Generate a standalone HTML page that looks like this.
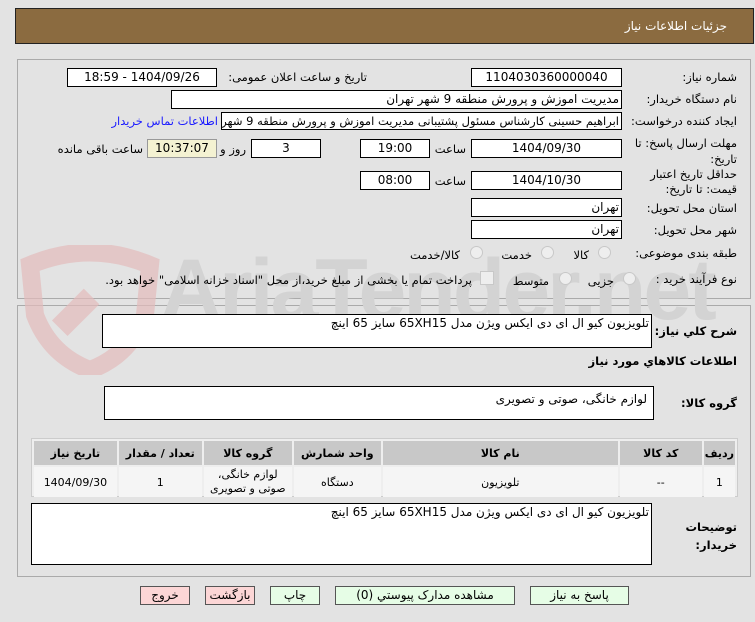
<!DOCTYPE html>
<html><head><meta charset="utf-8"><style>
body{margin:0;width:755px;height:622px;background:#e3e3e3;position:relative;overflow:hidden;font-family:"DejaVu Sans","Liberation Sans",sans-serif;font-size:11px;color:#000}
.a{position:absolute}
.box{position:absolute;background:#fff;border:1px solid #000;box-sizing:border-box;direction:rtl;text-align:center;line-height:16px;font-size:12px}
.l{position:absolute;direction:rtl;text-align:right;white-space:nowrap;font-size:11.5px}
.r{position:absolute;width:13px;height:13px;border-radius:50%;border:1px solid #c8c8c8;background:#eee;box-sizing:border-box}
.btn{position:absolute;top:586px;height:19px;border:1px solid #555;box-sizing:border-box;text-align:center;font-size:12px;line-height:17px;background:#e6fde6}
table{border-collapse:separate;border-spacing:2px;font-size:11px;direction:rtl}
th{background:#c8c8c8;height:22px;font-weight:bold}
td{background:#f5f5f5;height:28px;text-align:center}
</style></head><body>
<div class="a" style="left:15px;top:8px;width:739px;height:36px;background:#8b6b40;border:1px solid #222;box-sizing:border-box"></div>
<div class="l" style="right:28px;top:19px;color:#fff;font-size:12px">جزئیات اطلاعات نیاز</div>

<div class="a" style="left:17px;top:59px;width:734px;height:240px;border:1px solid #aaa;box-sizing:border-box"></div>
<div class="a" style="left:17px;top:305px;width:734px;height:272px;border:1px solid #aaa;box-sizing:border-box"></div>

<!-- watermark -->
<svg class="a" style="left:20px;top:245px;opacity:.7" width="140" height="130"><path d="M10 20 Q70 -5 130 20 L125 70 Q110 110 70 125 Q30 110 15 70 Z" fill="none" stroke="#e3bcbc" stroke-width="18"/><rect x="45" y="45" width="22" height="45" fill="#e3bcbc" transform="rotate(45 56 67)"/></svg>
<div class="a" style="left:160px;top:240px;width:560px;overflow:hidden;font-size:86px;font-weight:bold;color:#d3d3d3;font-family:'Liberation Sans',sans-serif;letter-spacing:-3px;line-height:100px;white-space:nowrap">AriaTender.net</div>

<div class="l" style="right:18px;top:70px">شماره نیاز:</div>
<div class="box" style="left:471px;top:68px;width:151px;height:19px">1104030360000040</div>
<div class="l" style="right:388px;top:70px">تاریخ و ساعت اعلان عمومی:</div>
<div class="box" style="left:67px;top:68px;width:150px;height:19px">1404/09/26 - 18:59</div>

<div class="l" style="right:18px;top:92px">نام دستگاه خریدار:</div>
<div class="box" style="left:171px;top:90px;width:451px;height:19px;text-align:right;padding-right:2px">مدیریت اموزش و پرورش منطقه 9 شهر تهران</div>

<div class="l" style="right:18px;top:114px">ایجاد کننده درخواست:</div>
<div class="box" style="left:221px;top:112px;width:401px;height:18px;text-align:right;padding-right:2px;overflow:hidden;white-space:nowrap;font-size:11.5px">ابراهیم حسینی کارشناس مسئول پشتیبانی مدیریت اموزش و پرورش منطقه 9 شهر تهران</div>
<div class="l" style="right:537px;top:114px;color:#1a1aff">اطلاعات تماس خریدار</div>

<div class="l" style="right:18px;top:135px;line-height:16px">مهلت ارسال پاسخ: تا<br>تاریخ:</div>
<div class="box" style="left:471px;top:139px;width:151px;height:19px">1404/09/30</div>
<div class="l" style="right:289px;top:142px">ساعت</div>
<div class="box" style="left:360px;top:139px;width:70px;height:19px">19:00</div>
<div class="box" style="left:251px;top:139px;width:70px;height:19px">3</div>
<div class="l" style="right:509px;top:142px">روز و</div>
<div class="box" style="left:147px;top:139px;width:70px;height:19px;background:#f4f2d2;border-color:#999">10:37:07</div>
<div class="l" style="right:612px;top:142px">ساعت باقی مانده</div>

<div class="l" style="right:18px;top:167px;line-height:15px">حداقل تاریخ اعتبار<br>قیمت: تا تاریخ:</div>
<div class="box" style="left:471px;top:171px;width:151px;height:19px">1404/10/30</div>
<div class="l" style="right:289px;top:174px">ساعت</div>
<div class="box" style="left:360px;top:171px;width:70px;height:19px">08:00</div>

<div class="l" style="right:18px;top:201px">استان محل تحویل:</div>
<div class="box" style="left:471px;top:198px;width:151px;height:19px;text-align:right;padding-right:2px">تهران</div>
<div class="l" style="right:18px;top:223px">شهر محل تحویل:</div>
<div class="box" style="left:471px;top:220px;width:151px;height:19px;text-align:right;padding-right:2px">تهران</div>

<div class="l" style="right:18px;top:246px">طبقه بندی موضوعی:</div>
<div class="r" style="left:598px;top:246px"></div><div class="l" style="right:166px;top:248px">کالا</div>
<div class="r" style="left:541px;top:246px"></div><div class="l" style="right:223px;top:248px">خدمت</div>
<div class="r" style="left:470px;top:246px"></div><div class="l" style="right:295px;top:248px">کالا/خدمت</div>

<div class="l" style="right:18px;top:272px">نوع فرآیند خرید :</div>
<div class="r" style="left:623px;top:272px"></div><div class="l" style="right:141px;top:274px">جزیی</div>
<div class="r" style="left:559px;top:272px"></div><div class="l" style="right:206px;top:274px">متوسط</div>
<div class="a" style="left:480px;top:271px;width:12px;height:12px;border:1px solid #c8c8c8;background:#eee"></div>
<div class="l" style="right:283px;top:273px;font-size:11.5px">پرداخت تمام یا بخشی از مبلغ خرید،از محل "اسناد خزانه اسلامی" خواهد بود.</div>

<div class="l" style="right:18px;top:324px;font-weight:bold">شرح کلي نياز:</div>
<div class="box" style="left:102px;top:314px;width:550px;height:34px;text-align:right;padding-right:2px;background:#fff">تلویزیون کیو ال ای دی ایکس ویژن مدل 65XH15 سایز 65 اینچ</div>
<div class="l" style="right:18px;top:354px;font-weight:bold">اطلاعات کالاهاي مورد نياز</div>
<div class="l" style="right:18px;top:396px;font-weight:bold">گروه کالا:</div>
<div class="box" style="left:104px;top:386px;width:550px;height:34px;text-align:right;padding-right:6px;line-height:24px">لوازم خانگی، صوتی و تصویری</div>

<div class="a" style="left:31px;top:438px;width:707px;height:59px;border:1px solid #ccc;box-sizing:border-box;background:#eee"></div>
<table class="a" style="left:32px;top:439px;width:705px">
<tr><th style="width:27px">ردیف</th><th style="width:80px">کد کالا</th><th style="width:233px">نام کالا</th><th style="width:85px">واحد شمارش</th><th style="width:86px">گروه کالا</th><th style="width:81px">تعداد / مقدار</th><th>تاریخ نیاز</th></tr>
<tr><td>1</td><td>--</td><td>تلویزیون</td><td>دستگاه</td><td style="line-height:14px">لوازم خانگی،<br>صوتی و تصویری</td><td>1</td><td>1404/09/30</td></tr>
</table>

<div class="l" style="right:18px;top:518px;font-weight:bold;line-height:18px">توضیحات<br>خریدار:</div>
<div class="box" style="left:31px;top:503px;width:621px;height:62px;text-align:right;padding-right:2px">تلویزیون کیو ال ای دی ایکس ویژن مدل 65XH15 سایز 65 اینچ</div>

<div class="btn" style="left:140px;width:50px;background:#fcd6d6">خروج</div>
<div class="btn" style="left:205px;width:50px;background:#fcd6d6">بازگشت</div>
<div class="btn" style="left:270px;width:50px">چاپ</div>
<div class="btn" style="left:335px;width:180px">مشاهده مدارک پیوستي (0)</div>
<div class="btn" style="left:530px;width:99px">پاسخ به نیاز</div>
</body></html>
